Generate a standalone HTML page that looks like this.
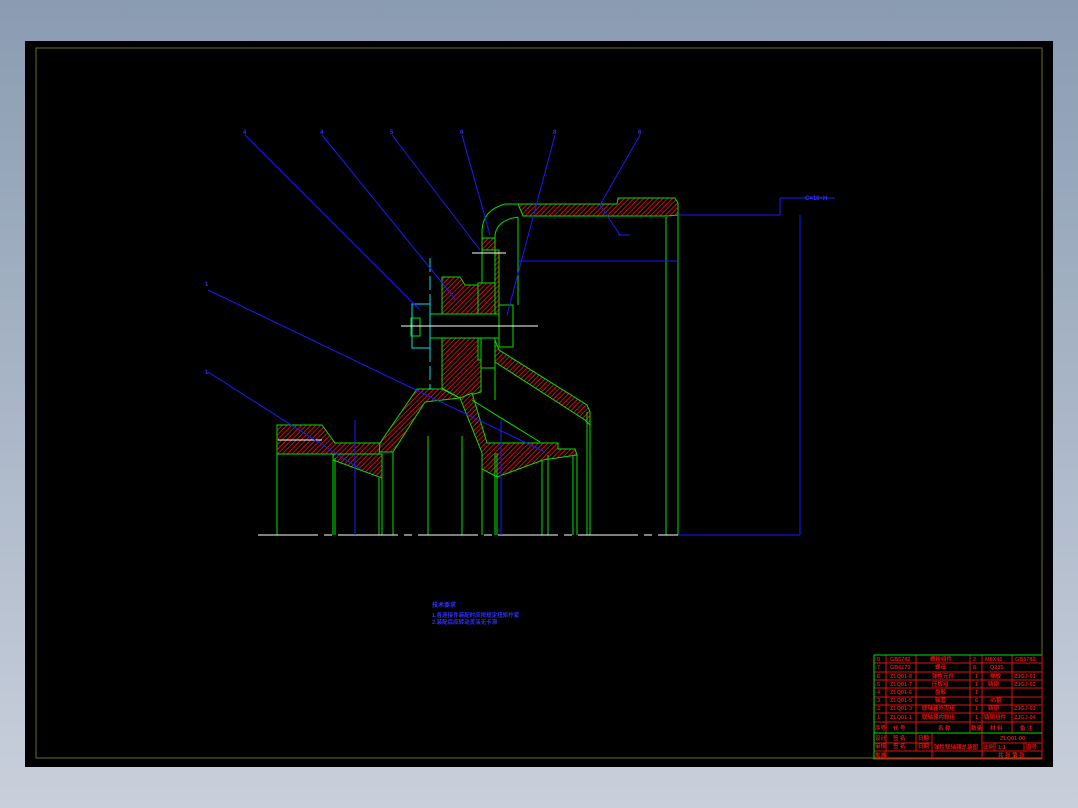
<!DOCTYPE html>
<html><head><meta charset="utf-8"><style>
html,body{margin:0;padding:0;width:1078px;height:808px;overflow:hidden;background:linear-gradient(#8a9cb2,#c9d0dc);}
svg{position:absolute;left:0;top:0}
text{font-family:"Liberation Sans","Noto Sans CJK SC",sans-serif}
</style></head><body>
<svg width="1078" height="808" viewBox="0 0 1078 808">
<rect x="25" y="41" width="1028" height="726" fill="#000"/>
<rect x="36" y="48" width="1006" height="710" fill="none" stroke="#6b6b1f" stroke-width="1"/>
<defs>
<pattern id="h" width="3.4" height="3.4" patternUnits="userSpaceOnUse" patternTransform="rotate(45)">
<rect width="3.4" height="3.4" fill="#000"/><line x1="0" y1="0" x2="0" y2="3.4" stroke="#e01010" stroke-width="1.8"/></pattern>
</defs>
<g stroke="#00e000" stroke-width="1" fill="url(#h)">
<polygon points="518,204 617,204 618,198 675,198 678,203 678,215 667,216 523,216"/>
<polygon points="442,277 460,277 465,285 478,285 478,314 442,314"/>
<polygon points="478,283 495,283 495,314 478,314"/>
<polygon points="442,338 478,338 478,360 481,360 481,392 460,398 442,388"/>
<polygon points="482,238 495,238 495,250 482,250"/>
<polygon points="495,250 499,250 499,314 495,314"/>
<polygon points="417,389 442,389 460,398 425,402 393,452 379,452 380,443"/>
<polygon points="277,425 322,425 335,443 380,443 379,454 277,454"/>
<polygon points="333,454 382,454 382,478 333,460"/>
<polygon points="460,398 472,393 487,443 558,443 558,449 575,449 577,455 543,460 497,477 482,469 482,453"/>
<polygon points="495,340 499,350 587,405 590,412 590,425 585,420 495,362"/>
</g>
<g stroke="#00e000" stroke-width="1" fill="none">
<path d="M505,204 Q483,210 482,230 L482,283"/>
<path d="M518,217 Q497,220 495,235 L495,250"/>
<line x1="518" y1="217" x2="518" y2="305"/>
<line x1="505" y1="204" x2="518" y2="204"/>
<polyline points="678,203 678,535"/>
<line x1="666" y1="217" x2="666" y2="535"/>
<rect x="430" y="314" width="69" height="24"/>
<rect x="499" y="305" width="14" height="42"/>
<rect x="411" y="318" width="9" height="18"/>
<line x1="481" y1="338" x2="481" y2="368"/>
<line x1="481" y1="368" x2="495" y2="368"/>
<line x1="495" y1="338" x2="495" y2="400"/>
<path d="M472,400 L540,442"/>
<line x1="590" y1="412" x2="590" y2="535"/>
<line x1="587" y1="412" x2="587" y2="535"/>
<g>
<line x1="277" y1="454" x2="277" y2="535"/><line x1="333" y1="458" x2="333" y2="535"/><line x1="335" y1="458" x2="335" y2="535"/>
<line x1="379" y1="478" x2="379" y2="535"/><line x1="382" y1="478" x2="382" y2="535"/><line x1="393" y1="452" x2="393" y2="535"/>
<line x1="428" y1="436" x2="428" y2="535"/><line x1="462" y1="436" x2="462" y2="535"/><line x1="482" y1="469" x2="482" y2="535"/>
<line x1="495" y1="453" x2="495" y2="535"/><line x1="497" y1="453" x2="497" y2="535"/><line x1="542" y1="460" x2="542" y2="535"/>
<line x1="548" y1="455" x2="548" y2="535"/><line x1="573" y1="455" x2="573" y2="535"/><line x1="577" y1="455" x2="577" y2="535"/>
</g>
</g>
<g stroke="#00e0e0" stroke-width="1" fill="none">
<rect x="412" y="304" width="18" height="44"/>
<line x1="430" y1="258" x2="430" y2="390" stroke-dasharray="14,4"/>
</g>
<g stroke="#fff" stroke-width="1">
<line x1="401" y1="326" x2="538" y2="326"/>
<line x1="472" y1="253" x2="506" y2="253"/>
<line x1="258" y1="535" x2="800" y2="535" stroke-dasharray="60,6,8,6"/>
<line x1="278" y1="440" x2="322" y2="440"/>
</g>
<g stroke="#1a1aff" stroke-width="1" fill="none">
<line x1="245" y1="135" x2="420" y2="310"/>
<line x1="322" y1="135" x2="456" y2="300"/>
<line x1="392" y1="135" x2="480" y2="250"/>
<line x1="462" y1="135" x2="490" y2="235"/>
<line x1="555" y1="135" x2="507" y2="315"/>
<line x1="640" y1="135" x2="600" y2="205"/>
<line x1="600" y1="205" x2="620" y2="235"/><line x1="618" y1="235" x2="630" y2="235"/>
<line x1="208" y1="290" x2="545" y2="452"/>
<line x1="208" y1="372" x2="362" y2="470"/>
<line x1="518" y1="261" x2="678" y2="261"/>
<line x1="678" y1="215" x2="780" y2="215"/>
<line x1="780" y1="215" x2="780" y2="198"/><line x1="780" y1="198" x2="835" y2="198"/>
<line x1="800" y1="215" x2="800" y2="535"/>
<line x1="678" y1="535" x2="800" y2="535"/>
<line x1="355" y1="420" x2="355" y2="535"/>
<line x1="501" y1="420" x2="501" y2="535"/>
</g>
<g fill="#3030ff" font-size="6" font-weight="bold">
<text x="243" y="134">4</text><text x="320" y="134">4</text><text x="390" y="134">5</text><text x="460" y="134">6</text><text x="553" y="134">8</text><text x="638" y="134">6</text>
<text x="205" y="286">1</text><text x="205" y="374">1</text><text x="805" y="200">C=10~H</text>
<text x="432" y="607" font-size="6">技术要求</text>
<text x="432" y="617" font-size="5.5">1.各连接件装配时应按规定扭矩拧紧</text>
<text x="432" y="624" font-size="5.5">2.装配后应转动灵活无卡滞</text>
</g>
<g stroke="#e01010" stroke-width="1" fill="none">
<rect x="874" y="655" width="168" height="104"/>
<line x1="874" y1="663" x2="1042" y2="663"/><line x1="874" y1="672" x2="1042" y2="672"/><line x1="874" y1="680" x2="1042" y2="680"/>
<line x1="874" y1="688" x2="1042" y2="688"/><line x1="874" y1="697" x2="1042" y2="697"/><line x1="874" y1="705" x2="1042" y2="705"/>
<line x1="874" y1="713" x2="1042" y2="713"/><line x1="874" y1="722" x2="1042" y2="722"/><line x1="874" y1="743" x2="932" y2="743"/>
<line x1="874" y1="751" x2="1042" y2="751"/><line x1="982" y1="743" x2="1042" y2="743"/>
<line x1="886" y1="655" x2="886" y2="759"/><line x1="916" y1="655" x2="916" y2="751"/><line x1="932" y1="733" x2="932" y2="759"/>
<line x1="970" y1="655" x2="970" y2="733"/><line x1="982" y1="655" x2="982" y2="759"/><line x1="1012" y1="655" x2="1012" y2="733"/>
<line x1="995" y1="743" x2="995" y2="751"/><line x1="1024" y1="743" x2="1024" y2="751"/>
</g>
<g stroke="#00e000" stroke-width="1"><line x1="874" y1="733" x2="1042" y2="733"/><line x1="874" y1="655" x2="874" y2="759"/><line x1="874" y1="655" x2="1042" y2="655"/></g>
<g fill="#e01010" font-size="5.5" font-weight="bold">
<text x="877" y="661">9</text><text x="890" y="661">GB5782</text><text x="930" y="661">螺栓组件</text><text x="973" y="661">2</text><text x="985" y="661">M8X45</text><text x="1015" y="661">GB5782</text>
<text x="877" y="669">7</text><text x="890" y="669">GB6170</text><text x="935" y="669">螺母</text><text x="973" y="669">8</text><text x="990" y="669">Q235</text>
<text x="877" y="678">6</text><text x="890" y="678">ZLQ01-8</text><text x="932" y="678">弹性元件</text><text x="975" y="678">1</text><text x="990" y="678">橡胶</text><text x="1014" y="678">ZJGJ-01</text>
<text x="877" y="686">5</text><text x="890" y="686">ZLQ01-7</text><text x="932" y="686">压板组</text><text x="975" y="686">1</text><text x="988" y="686">铸钢</text><text x="1014" y="686">ZJGJ-02</text>
<text x="877" y="694">4</text><text x="890" y="694">ZLQ01-6</text><text x="935" y="694">盘毂</text><text x="975" y="694">1</text>
<text x="877" y="702">3</text><text x="890" y="702">ZLQ01-5</text><text x="935" y="702">轴套</text><text x="975" y="702">6</text><text x="990" y="702">45钢</text>
<text x="877" y="710">2</text><text x="890" y="710">ZLQ01-3</text><text x="922" y="710">联轴器外壳组</text><text x="975" y="710">1</text><text x="988" y="710">铸钢</text><text x="1014" y="710">ZJGJ-03</text>
<text x="877" y="719">1</text><text x="890" y="719">ZLQ01-1</text><text x="922" y="719">联轴器内毂组</text><text x="975" y="719">1</text><text x="984" y="719">铸钢组件</text><text x="1014" y="719">ZJGJ-04</text>
<text x="875" y="730">序号</text><text x="893" y="730">代 号</text><text x="938" y="730">名 称</text><text x="971" y="730">数量</text><text x="990" y="730">材 料</text><text x="1020" y="730">备 注</text>
<text x="875" y="740">设计</text><text x="893" y="740">签 名</text><text x="918" y="740">日期</text><text x="934" y="749">弹性联轴器总装图</text><text x="1000" y="740">ZLQ01-00</text>
<text x="875" y="748">审核</text><text x="893" y="748">签 名</text><text x="918" y="748">日期</text><text x="983" y="749">比例</text><text x="998" y="749">1:1</text><text x="1026" y="749">图号</text>
<text x="875" y="757">批准</text><text x="998" y="757">共 张 第 张</text>
</g>
</svg>
</body></html>
